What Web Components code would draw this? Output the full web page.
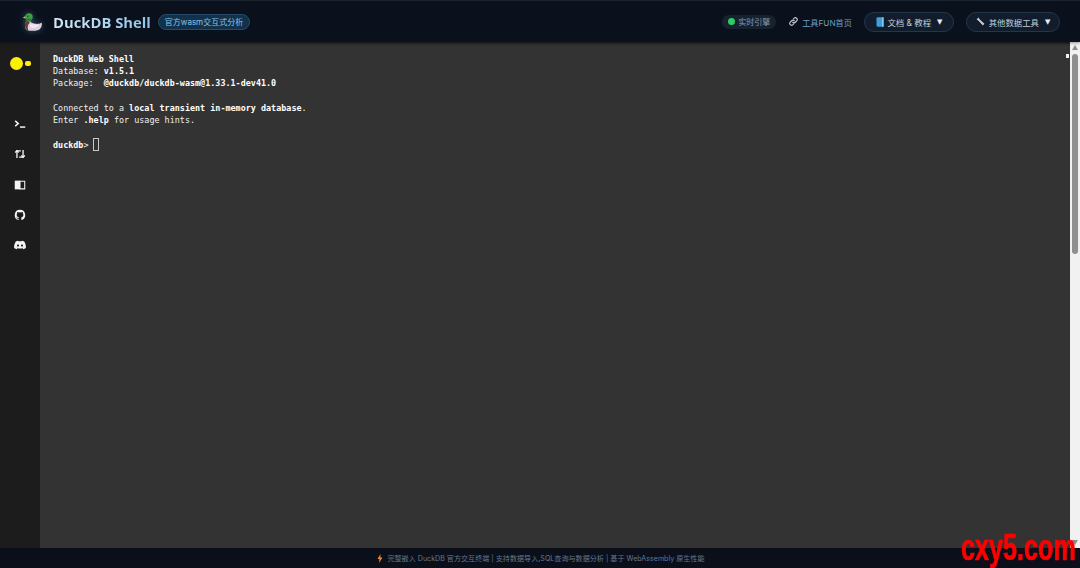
<!DOCTYPE html>
<html lang="zh"><head><meta charset="utf-8"><title>DuckDB Shell</title>
<style>
html,body{margin:0;height:100%;background:#333;overflow:hidden}
body{font-family:"Inter","Noto Sans CJK SC",sans-serif}
</style></head><body>
<template id="t-app"><style>
:host{display:grid;grid-template-rows:42px 1fr 20px;width:1080px;height:568px;position:relative;overflow:hidden}
main{display:grid;grid-template-columns:40px 1fr 10px;min-height:0}
</style>
<app-header></app-header>
<main><side-bar></side-bar><term-view></term-view><scroll-bar></scroll-bar></main>
<app-footer></app-footer>
<water-mark></water-mark></template>

<template id="t-header"><style>
:host{display:flex;align-items:center;background:#0a111c;border-top:1px solid #1a2530;box-sizing:border-box;padding:0 20px 0 22px;box-shadow:0 1px 3px #0006;z-index:1;font-family:"Inter","Noto Sans CJK SC",sans-serif}
svg{display:block;flex:none}
.logo{filter:drop-shadow(0 0 3px #6fb6e066)}
h1{margin:0 0 0 9px;font-size:14.8px;font-weight:700;line-height:20px;color:#a9d3ee;background:linear-gradient(90deg,#d3e8f5,#8fc5e8);-webkit-background-clip:text;background-clip:text;-webkit-text-fill-color:transparent;font-family:"Open Sans","Noto Sans CJK SC",sans-serif}
.tag{margin-left:7px;height:16px;box-sizing:border-box;border:1px solid #274a66;background:#12314a;color:#8cc3e6;border-radius:8px;padding:0 6px;font-size:8px;line-height:14px;white-space:nowrap}
.sp{flex:1}
.st{display:flex;align-items:center;gap:3px;height:14px;padding:0 6px;background:#172230;border-radius:7px;color:#8d9aa8;font-size:8px;white-space:nowrap}
.dot{width:7px;height:7px;border-radius:50%;background:#2ecc62}
.link{display:flex;align-items:center;gap:4px;margin-left:13px;color:#6f9fc4;font-size:8.2px;white-space:nowrap}
.btn{display:flex;align-items:center;gap:4px;height:20px;box-sizing:border-box;border:1px solid #24364a;background:#111d2c;border-radius:10px;color:#c3ced8;font-size:8.4px;white-space:nowrap;justify-content:center}
.b1{margin-left:12px;width:90px}.b2{margin-left:12px;width:94px}
.car{font-size:7px;color:#e6edf3;font-family:"DejaVu Sans",sans-serif;margin-left:2px}
</style>
<svg class="logo" width="22" height="22" viewBox="0 0 22 22">
<path d="M6 19.500C3.500 19 2.800 16.500 3 14 3.200 11.500 4.500 10.500 4.500 9L8 9.500C8.500 11 9.500 12 12 12.500 14.500 13 17 13.500 19.500 11.500 20.500 14 19.500 17.500 16.500 19 13.500 20 9 20 6 19.500Z" fill="#dcd0dc"/>
<path d="M4.500 10C3.200 11.500 2.800 13 3 15 3.200 17.500 4.300 19 6.500 19.500 5.300 17 5.500 13.500 8 11.800 7 11 6.500 10.500 6.200 9.800Z" fill="#6b3a34"/>
<path d="M8 13.500C10.500 12.800 14 13.500 17 14 16 16.500 12 17.500 9 16.500 8 16 7.600 14.500 8 13.500Z" fill="#f0e8f0"/>
<circle cx="7" cy="6" r="3.700" fill="#3f9e45"/><rect x="3.800" y="7.500" width="5.500" height="3" fill="#2f7a3a"/>
<path d="M3.500 5L.8 6.700 3.500 7.500Z" fill="#e3b54a"/><circle cx="5.800" cy="5.200" r=".6" fill="#111"/>
</svg>
<h1>DuckDB Shell</h1><span class="tag">官方wasm交互式分析</span><span class="sp"></span>
<span class="st"><i class="dot"></i>实时引擎</span>
<span class="link"><svg width="9" height="9" viewBox="0 0 24 24" fill="none" stroke="#c2ccd6" stroke-width="3" stroke-linecap="round"><path d="M10 14a5 5 0 0 0 7 0l4-4a5 5 0 0 0-7-7l-2 2"/><path d="M14 10a5 5 0 0 0-7 0l-4 4a5 5 0 0 0 7 7l2-2"/></svg>工具FUN首页</span>
<span class="btn b1"><svg width="8" height="10" viewBox="0 0 8 10"><path d="M.5 1.500C.5.700 1 .3 1.800.3H7.500V9.700H1.800C1 9.700.5 9.200.5 8.500Z" fill="#3d9fdc"/><rect x="6.300" y=".3" width="1.200" height="9.400" fill="#a9d7f2"/></svg>文档 &amp; 教程 <span class="car">▼</span></span>
<span class="btn b2"><svg width="9" height="9" viewBox="0 0 9 9"><path d="M.6 2.400L2.400.6 3.600 2.300 8.400 6.800 6.900 8.400 2.200 3.500Z" fill="#c5ccd4"/></svg>其他数据工具 <span class="car">▼</span></span></template>

<template id="t-side"><style>
:host{display:flex;flex-direction:column;align-items:center;background:#1c1c1c}
.logo{display:flex;align-items:center;gap:2px;margin:14px 0 0 0;height:14px}
.c{width:13px;height:13px;border-radius:50%;background:#fff000}
.s{width:6px;height:5px;border-radius:2px;background:#fff000}
nav{display:flex;flex-direction:column;align-items:center;gap:16.300px;margin-top:47px}
svg{display:block;width:14px;height:14px}
</style>
<div class="logo"><i class="c"></i><i class="s"></i></div>
<nav>
<svg viewBox="0 0 16 16" fill="none" stroke="#f4f4f4" stroke-width="1.700"><path d="M2.500 4.500L6 7.500 2.500 10.500"/><path d="M8 11.500H14"/></svg>
<svg viewBox="0 0 16 16" fill="none" stroke="#f4f4f4" stroke-width="1.500"><path d="M4.500 12.500V4.500H9"/><path d="M2.500 6.300L4.500 4.300 6.500 6.300"/><path d="M11.500 3.500V11.500H7"/><path d="M9.500 9.700L11.500 11.700 13.500 9.700"/></svg>
<svg viewBox="0 0 16 16"><path d="M2 3H8V13H2Z" fill="#f4f4f4"/><path d="M8 3.600H13.400V12.400H8Z" fill="none" stroke="#f4f4f4" stroke-width="1.200"/></svg>
<svg viewBox="0 0 16 16"><path fill="#f4f4f4" d="M8 2a6 6 0 0 0-1.900 11.700c.3.050.4-.1.400-.3v-1c-1.700.35-2-.75-2-.75-.25-.7-.65-.85-.65-.85-.5-.35.05-.35.05-.35.6.05.95.6.95.6.5.95 1.400.7 1.700.5.050-.4.200-.7.400-.85-1.300-.15-2.700-.7-2.700-2.950 0-.65.200-1.150.6-1.550-.05-.15-.25-.8.050-1.600 0 0 .5-.15 1.650.6a5.700 5.700 0 0 1 3 0c1.150-.75 1.650-.6 1.650-.6.3.8.100 1.450.05 1.600.4.400.6.900.6 1.550 0 2.250-1.400 2.800-2.700 2.950.2.200.4.500.4 1v1.650c0 .2.100.35.400.3A6 6 0 0 0 8 2Z"/></svg>
<svg viewBox="0 0 16 16"><path fill="#f4f4f4" d="M12.800 4A10.500 10.500 0 0 0 10.200 3.200l-.35.65a9.500 9.500 0 0 0-3.700 0L5.800 3.200A10.500 10.500 0 0 0 3.200 4C1.500 6.500 1.100 8.900 1.300 11.300a10.500 10.500 0 0 0 3.200 1.600l.65-1.050-1-.5.250-.2a7.500 7.500 0 0 0 7.200 0l.25.200-1 .5.650 1.050a10.500 10.500 0 0 0 3.200-1.600C14.900 8.500 14.300 6.200 12.800 4ZM5.700 9.900c-.65 0-1.150-.6-1.150-1.300S5.050 7.300 5.700 7.300s1.150.6 1.150 1.300-.5 1.300-1.150 1.300Zm4.600 0c-.65 0-1.150-.6-1.150-1.300s.5-1.300 1.150-1.300 1.150.6 1.150 1.300-.5 1.300-1.150 1.300Z"/></svg>
</nav></template>

<template id="t-term"><style>
:host{display:block;position:relative;background:#333;color:#f0f0f0;font:8.4px/12.2px "DejaVu Sans Mono",monospace;letter-spacing:.03px;padding:11px 0 0 13px;box-shadow:inset 0 3px 3px -2px #0007}
b{font-weight:700;color:#fff}
.cur{display:inline-block;width:4px;height:11px;border:1px solid #c8c8c8;vertical-align:-3px;margin-left:-1px}
.mark{position:absolute;right:1px;top:12px;width:3px;height:4px;background:#eee}
div{height:12.2px;white-space:pre}
</style><div><b>DuckDB Web Shell</b></div><div>Database: <b>v1.5.1</b></div><div>Package:  <b>@duckdb/duckdb-wasm@1.33.1-dev41.0</b></div><div></div><div>Connected to a <b>local transient in-memory database</b>.</div><div>Enter <b>.help</b> for usage hints.</div><div></div><div><b>duckdb</b>&gt; <span class="cur"></span></div><span class="mark"></span></template>

<template id="t-scroll"><style>
:host{display:flex;flex-direction:column;align-items:center;background:#f1f1f1;position:relative}
.up,.dn{width:0;height:0;border-left:3px solid transparent;border-right:3px solid transparent;flex:none}
.up{border-bottom:5px solid #8c8c8c;margin-top:3px}
.th{width:6px;height:200px;background:#8f8f8f;border-radius:3px;margin-top:4px;flex:none}
.gap{flex:1}
.dn{border-top:5px solid #8c8c8c;margin-bottom:3px}
</style><i class="up"></i><i class="th"></i><i class="gap"></i><i class="dn"></i></template>

<template id="t-foot"><style>
:host{display:flex;align-items:center;justify-content:center;gap:4px;background:#0a0f1a;color:#66778d;font:7.1px/20px "Inter","Noto Sans CJK SC",sans-serif;white-space:nowrap;z-index:1;padding:1px 0 0 2px;box-sizing:border-box}
svg{display:block}
</style><svg width="6" height="9" viewBox="0 0 6 9"><path d="M3.500 0L.5 5H2.500L2 9 5.500 3.500H3.300Z" fill="#f08a3c"/></svg><span>完整嵌入 DuckDB 官方交互终端 | 支持数据导入,SQL查询与数据分析 | 基于 WebAssembly 原生性能</span></template>

<template id="t-wm"><style>
:host{position:absolute;left:961px;top:528px;z-index:5;color:#f00;font:700 36px/40px "Liberation Sans",sans-serif;transform:scaleX(.7);transform-origin:0 0;-webkit-text-stroke:.7px #f00;white-space:nowrap}
</style>cxy5.com</template>

<script>
const def=(name,id)=>customElements.define(name,class extends HTMLElement{
  constructor(){super();this.attachShadow({mode:"open"}).append(document.getElementById(id).content.cloneNode(true));}
});
def("app-header","t-header");def("side-bar","t-side");def("term-view","t-term");
def("scroll-bar","t-scroll");def("app-footer","t-foot");def("water-mark","t-wm");def("duck-app","t-app");
document.body.append(document.createElement("duck-app"));
</script>
</body></html>
